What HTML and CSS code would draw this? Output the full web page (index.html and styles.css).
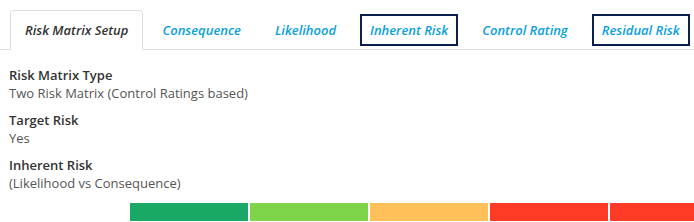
FILE: index.html
```html
<!DOCTYPE html>
<html lang="en">
<head>
  <meta charset="UTF-8">
  <title>Risk Matrix Setup</title>
  <link rel="stylesheet" href="styles.css">
</head>
<body>
  <div class="setup-page">
    <ul class="tabs">
      <li class="tab active"><span>Risk Matrix Setup</span></li>
      <li class="tab"><span>Consequence</span></li>
      <li class="tab"><span>Likelihood</span></li>
      <li class="tab outlined"><span>Inherent Risk</span></li>
      <li class="tab"><span>Control Rating</span></li>
      <li class="tab outlined"><span>Residual Risk</span></li>
    </ul>

    <div class="details">
      <div class="field">
        <div class="field-label">Risk Matrix Type</div>
        <div class="field-value">Two Risk Matrix (Control Ratings based)</div>
      </div>
      <div class="field">
        <div class="field-label">Target Risk</div>
        <div class="field-value">Yes</div>
      </div>
      <div class="field">
        <div class="field-label">Inherent Risk</div>
        <div class="field-value">(Likelihood vs Consequence)</div>
      </div>
    </div>

    <div class="risk-scale">
      <div class="level low"></div>
      <div class="level minor"></div>
      <div class="level medium"></div>
      <div class="level high"></div>
      <div class="level extreme"></div>
    </div>
  </div>
</body>
</html>
```

FILE: styles.css
```css
/* styles.css */
body {
  font-family: "Open Sans", Arial, sans-serif;
  margin: 0;
  padding: 0;
  background-color: #fff;
  font-size: 13px;
  color: #333;
  overflow: hidden;
}

.setup-page {
  padding-top: 10px;
}

.tabs {
  display: flex;
  list-style: none;
  margin: 0;
  padding: 0 0 0 10px;
  border-bottom: 1px solid #ddd;
  white-space: nowrap;
}

.tab {
  flex: 0 0 auto;
  display: flex;
  align-items: center;
  height: 38px;
  padding: 0 14px;
  margin-right: 4px;
  margin-bottom: -1px;
  font-style: italic;
  font-weight: 600;
  color: #0aa0d8;
  border: 1px solid transparent;
  border-radius: 4px 4px 0 0;
}

.tab.active {
  color: #333;
  background: #fff;
  border-color: #ddd;
  border-bottom-color: #fff;
}

.tab.outlined span {
  border: 2px solid #0b1f4f;
  padding: 5px 8px;
  margin: 0 -10px;
}

.details {
  padding: 16px 9px 0;
}

.field {
  margin-bottom: 9px;
}

.field-label {
  font-weight: 600;
  line-height: 18px;
}

.field-value {
  color: #555;
  line-height: 18px;
}

.risk-scale {
  display: flex;
  gap: 2px;
  margin: 11px 0 0 130px;
}

.level {
  flex: 0 0 118px;
  height: 18px;
}

.low { background: #19a866; }
.minor { background: #7ed348; }
.medium { background: #ffc05a; }
.high { background: #ff3b25; }
.extreme { background: #ff3b25; }
```
